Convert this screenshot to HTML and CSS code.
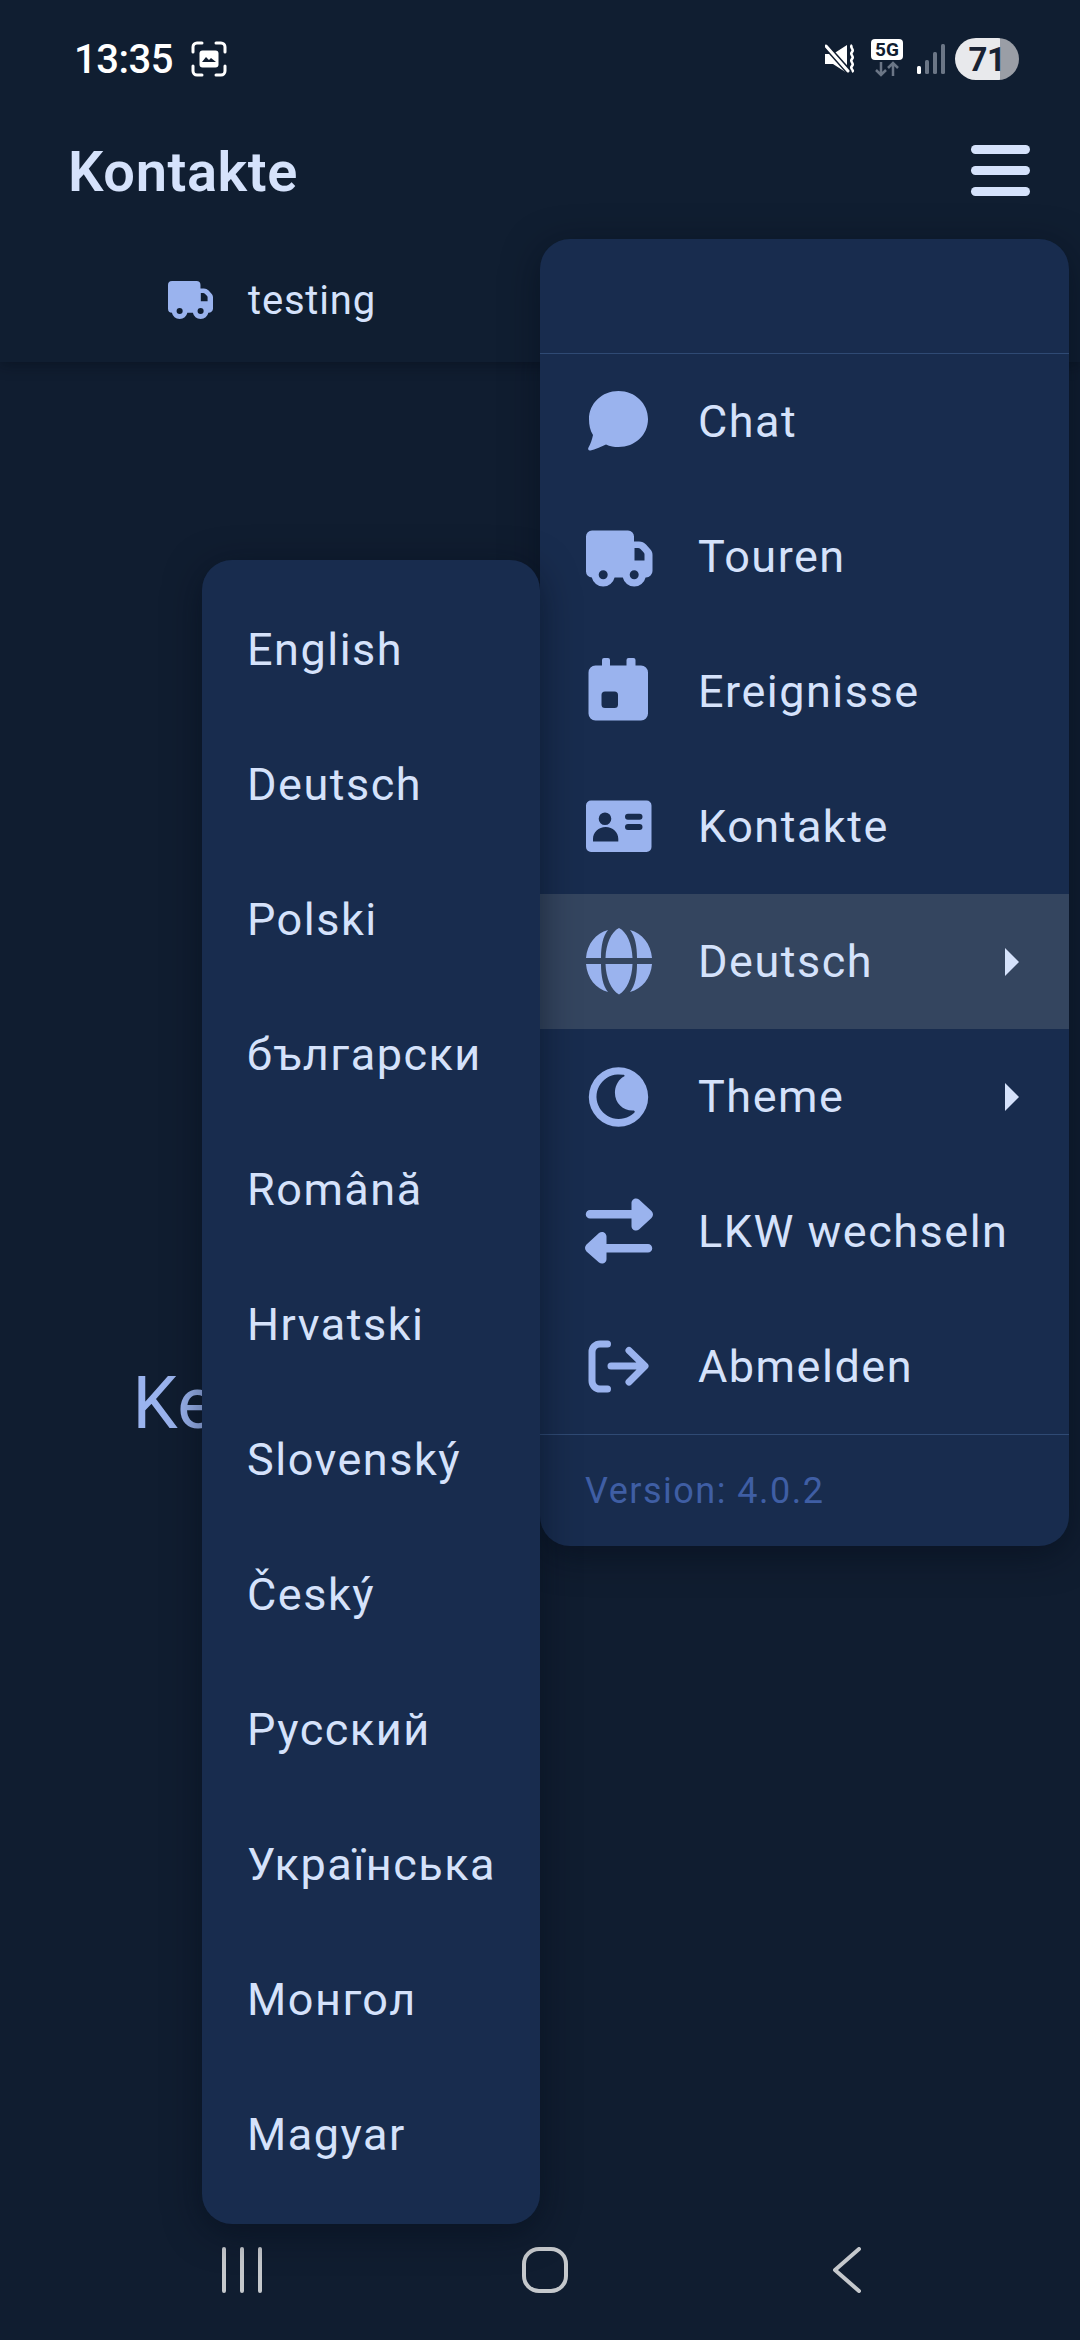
FILE: index.html
```html
<!DOCTYPE html>
<html lang="de">
<head>
<meta charset="utf-8">
<title>Kontakte</title>
<link rel="stylesheet" href="styles.css">
</head>
<body>
<div class="screen">
  <div class="top">
    <div class="status">
      <span class="time">13:35</span>
      <svg class="shot" viewBox="0 0 36 36" width="36" height="36"><path d="M2 11V6a4 4 0 0 1 4-4h5M25 2h5a4 4 0 0 1 4 4v5M34 25v5a4 4 0 0 1-4 4h-5M11 34H6a4 4 0 0 1-4-4v-5" fill="none" stroke="#fff" stroke-width="3" stroke-linecap="round"/><rect x="8.500" y="9.500" width="19" height="17" rx="3" fill="#fff"/><path d="M11 21l4-5 3 3 2-2 5 4z" fill="#101d30"/></svg>
      <span class="grow"></span>
      <svg class="mute" viewBox="0 0 32 32" width="32" height="32"><path d="M0 11h8l14-9v28l-14-9H0z" fill="#fff"/><path d="M0 2l24 27" stroke="#101d30" stroke-width="6"/><path d="M1 3l22 25" stroke="#fff" stroke-width="3" stroke-linecap="round"/><path d="M27 2c-3 3 3 4 0 7s3 4 0 7 3 4 0 7 3 4 0 6" fill="none" stroke="#fff" stroke-width="2.500"/></svg>
      <div class="net">
        <span class="net-label">5G</span>
        <svg viewBox="0 0 32 16" width="32" height="16"><path d="M10 1v13M5 9l5 5 5-5M22 15V2M17 7l5-5 5 5" fill="none" stroke="#6b7686" stroke-width="2.500"/></svg>
      </div>
      <svg class="signal" viewBox="0 0 28 30" width="28" height="30"><rect x="0" y="22" width="4" height="8" rx="1.500" fill="#fff"/><rect x="8" y="16" width="4" height="14" rx="1.500" fill="#6b7686"/><rect x="16" y="8" width="4" height="22" rx="1.500" fill="#6b7686"/><rect x="24" y="0" width="4" height="30" rx="1.500" fill="#6b7686"/></svg>
      <div class="battery"><span class="battery-num">71</span></div>
    </div>
    <div class="appbar">
      <h1 class="title">Kontakte</h1>
      <div class="burger"><i></i><i></i><i></i></div>
    </div>
    <div class="tabrow">
      <svg class="tab-icon" viewBox="3 9.500 66.500 56" width="45" height="38"><use href="#truck72"/></svg>
      <span class="tab-text">testing</span>
    </div>
  </div>
  <main class="content"><p class="empty">Keine Kontakte gefunden</p></main>
  <nav class="navbar">
    <svg viewBox="0 0 42 46" width="42" height="46"><path d="M3 2v42M21 2v42M39 2v42" stroke="#c5c8cc" stroke-width="4" stroke-linecap="round"/></svg>
    <svg class="nav-home" viewBox="0 0 46 46" width="46" height="46"><rect x="2" y="2" width="42" height="42" rx="15" fill="none" stroke="#c5c8cc" stroke-width="4"/></svg>
    <svg class="nav-back" viewBox="0 0 30 46" width="30" height="46"><path d="M27 2L3 23l24 21" fill="none" stroke="#c5c8cc" stroke-width="4" stroke-linecap="round" stroke-linejoin="round"/></svg>
  </nav>

  <div class="menu menu-main">
    <div class="menu-head"></div>
    <div class="item">
      <svg class="ico" viewBox="0 0 72 72"><path d="M35.500 5C52 5 65 17.500 65 33 65 49 52 61 35.500 61c-4.500 0-8.500-.500-12.500-2.500-5 2.500-11 5-15.500 6-2 .500-3-1.500-2-3 2-3.500 3.500-7.500 4.500-12.500C7 44.500 6 39 6 33 6 17.500 19 5 35.500 5z"/></svg>
      <span>Chat</span>
    </div>
    <div class="item">
      <svg class="ico" viewBox="0 0 72 72"><use href="#truck72"/></svg>
      <span>Touren</span>
    </div>
    <div class="item">
      <svg class="ico" viewBox="0 0 72 72"><path fill-rule="evenodd" d="M21 2h4a2 2 0 0 1 2 2v5.500h16.500V4a2 2 0 0 1 2-2h5a2 2 0 0 1 2 2v5.500H58a7 7 0 0 1 7 7v41a7 7 0 0 1-7 7H12.500a7 7 0 0 1-7-7v-41a7 7 0 0 1 7-7H19V4a2 2 0 0 1 2-2zM22 35.500a3.500 3.500 0 0 0-3.500 3.500v9.500A3.500 3.500 0 0 0 22 52h9.500a3.500 3.500 0 0 0 3.500-3.500V39a3.500 3.500 0 0 0-3.500-3.500z"/></svg>
      <span>Ereignisse</span>
    </div>
    <div class="item">
      <svg class="ico" viewBox="0 0 72 72"><path fill-rule="evenodd" d="M8 9.500h55.500a5 5 0 0 1 5 5V56a5 5 0 0 1-5 5H8a5 5 0 0 1-5-5V14.500a5 5 0 0 1 5-5zM22 21.500a6.300 6.300 0 1 0 0 12.600 6.300 6.300 0 0 0 0-12.600zM10 50.500h25.300c0-.800 0-1.500 0-2.500 0-7-5.500-12-12.600-12S10 41 10 48c0 1 0 1.700 0 2.500zM45 22.800a3 3 0 0 0 0 6h11.500a3 3 0 0 0 0-6zM45 33a3 3 0 0 0 0 6h11.500a3 3 0 0 0 0-6z"/></svg>
      <span>Kontakte</span>
    </div>
    <div class="item active">
      <svg class="ico" viewBox="0 0 72 72"><path d="M36 2C44 6 49 18 49.500 32H22.500C23 18 28 6 36 2zM22.500 38H49.500C49 52 44 64 36 68.500 28 64 23 52 22.500 38zM25 4C20 10 18 20 18 32H3C4 18 13 7 25 4zM47 4C52 10 54 20 54 32H69C68 18 59 7 47 4zM3 38H18C18 50 20 60 25 66 13 63 4 52 3 38zM69 38H54C54 50 52 60 47 66 59 63 68 52 69 38z"/></svg>
      <span>Deutsch</span>
      <i class="caret"></i>
    </div>
    <div class="item">
      <svg class="ico" viewBox="0 0 72 72"><path fill-rule="evenodd" d="M35.500 6.300a29.700 29.700 0 1 1 0 59.400 29.700 29.700 0 0 1 0-59.400zM40 13.800A22.300 22.300 0 1 0 51 52c1.500-1 .500-2.500-.500-2.500C40 50 31 42 32 30 32.500 24 36 18 41 15.500c1-.800.500-1.800-1-1.700z"/></svg>
      <span>Theme</span>
      <i class="caret"></i>
    </div>
    <div class="item">
      <svg class="ico" viewBox="0 0 72 72"><path d="M7 14H48.500V7c0-4 4.500-6 7.500-3.500L68.500 15c2 2 2 5 0 7L56 33.500c-3 2.500-7.500.500-7.500-3.500V22.500H7a4.250 4.250 0 0 1 0-8.500zM65 56.500H23.500V63c0 4-4.500 6-7.500 3.500L3.500 55.500c-2-2-2-5 0-7L16 37c3-2.500 7.500-.500 7.500 3.500V48H65a4.250 4.250 0 0 1 0 8.500z"/></svg>
      <span>LKW wechseln</span>
    </div>
    <div class="item">
      <svg class="ico ico-line" viewBox="0 0 72 72"><path d="M24.500 13H17a8 8 0 0 0-8 8V50a8 8 0 0 0 8 8H24.500M46 19.500L62 35 46 51M28 35H60"/></svg>
      <span>Abmelden</span>
    </div>
    <div class="menu-foot">Version: 4.0.2</div>
  </div>

  <div class="menu menu-lang">
    <div class="item lang">English</div>
    <div class="item lang">Deutsch</div>
    <div class="item lang">Polski</div>
    <div class="item lang">български</div>
    <div class="item lang">Română</div>
    <div class="item lang">Hrvatski</div>
    <div class="item lang">Slovenský</div>
    <div class="item lang">Český</div>
    <div class="item lang">Русский</div>
    <div class="item lang">Українська</div>
    <div class="item lang">Монгол</div>
    <div class="item lang">Magyar</div>
  </div>

  <svg class="defs" width="0" height="0">
    <defs>
      <path id="truck72" fill-rule="evenodd" d="M9 9.500H45a6 6 0 0 1 6 6v5h5c3 0 5 1 7 3l4 4.500c2 2 2.500 4 2.500 6V50a6.500 6.500 0 0 1-6.500 6.500h-.400a11.700 11.700 0 0 1-22.800 0H31.600a11.700 11.700 0 0 1-22.800 0H9a6 6 0 0 1-6-6v-35a6 6 0 0 1 6-6zM51.500 27V39.500h10V33.500c0-.800-.300-1.500-1-2.200l-3-3.200c-.700-.700-1.500-1.100-2.500-1.100zM20.200 49.300a4.500 4.500 0 1 0 0 9 4.500 4.500 0 0 0 0-9zM51.200 49.300a4.500 4.500 0 1 0 0 9 4.500 4.500 0 0 0 0-9z"/>
    </defs>
  </svg>
</div>
</body>
</html>
```
FILE: styles.css
```css
* { box-sizing: border-box; }
html, body { margin: 0; padding: 0; }
body { background: #101d30; font-family: Roboto, "Noto Sans", sans-serif; }
.screen { position: relative; width: 1080px; height: 2340px; overflow: hidden; background: #101d30; display: flex; flex-direction: column; }
.top { background: #101e31; box-shadow: 0 2px 14px rgba(4, 10, 20, .45); position: relative; height: 362px; flex: none; }
.status { height: 118px; display: flex; align-items: center; padding: 0 61px 0 74px; color: #fff; }
.time { font-size: 40px; font-weight: 500; letter-spacing: -.5px; width: 117px; }
.grow { flex: 1; }
.shot { display: block; }
.mute { margin-right: 14px; }
.net { width: 32px; display: flex; flex-direction: column; align-items: center; margin-right: 14px; gap: 1px; margin-top: -2px; }
.net svg { display: block; }
.net-label { width: 32px; height: 21px; background: #fff; border-radius: 4px; color: #101d30; font-size: 19px; font-weight: 700; line-height: 21px; text-align: center; }
.signal { margin-right: 10px; }
.battery { width: 64px; height: 42px; border-radius: 21px; background: linear-gradient(90deg, #e8e9ec 0 45px, #9a9ea6 45px); color: #182233; display: flex; align-items: center; justify-content: center; }
.battery-num { font-size: 33px; font-weight: 700; letter-spacing: -.5px; }
.appbar { height: 108px; display: flex; align-items: center; justify-content: space-between; padding: 0 50px 0 68px; }
.title { margin: 0; font-size: 56px; font-weight: 600; letter-spacing: .6px; color: #d5e2fb; }
.burger { width: 59px; display: flex; flex-direction: column; gap: 12px; margin-bottom: 3px; }
.burger i { display: block; height: 9px; border-radius: 5px; background: #d5e2fb; }
.tabrow { height: 136px; display: flex; align-items: center; padding: 12px 0 0 168px; }
.tab-icon { fill: #9ab3ee; display: block; margin-right: 35px; }
.tab-text { font-size: 40px; letter-spacing: .8px; color: #d5e2fb; }
.content { flex: 1; display: flex; justify-content: center; align-items: flex-start; }
.empty { margin: 0; padding-top: 1000px; font-size: 72px; line-height: 84px; letter-spacing: .6px; color: #9ab3ee; white-space: nowrap; }
.navbar { flex: none; height: 116px; display: flex; align-items: center; padding: 0 0 24px 221px; }
.navbar svg { display: block; }
.nav-home { margin-left: 259px; }
.nav-back { margin-left: 264px; }
.menu { position: absolute; background: #182c4e; box-shadow: 0 8px 36px rgba(4, 10, 22, .5); color: #d5e2fb; font-size: 45px; letter-spacing: 1.500px; }
.menu-main { left: 540px; top: 239px; width: 529px; height: 1307px; border-radius: 30px; overflow: hidden; }
.menu-head { height: 115px; border-bottom: 1px solid #2f4a74; }
.item { height: 135px; display: flex; align-items: center; padding-left: 43px; white-space: nowrap; }
.item.active { background: #34455f; }
.ico { width: 72px; height: 72px; fill: #9ab3ee; display: block; flex: none; margin-right: 43px; }
.ico-line { fill: none; stroke: #9ab3ee; stroke-width: 7; stroke-linecap: round; stroke-linejoin: round; }
.caret { margin-left: auto; margin-right: 50px; width: 0; height: 0; border-left: 14px solid #d5e2fb; border-top: 14px solid transparent; border-bottom: 14px solid transparent; }
.menu-foot { height: 112px; border-top: 1px solid #2f4a74; display: flex; align-items: center; padding-left: 45px; font-size: 36px; letter-spacing: 1.500px; color: #3f5ea4; }
.menu-lang { left: 202px; top: 560px; width: 338px; height: 1664px; border-radius: 30px; padding: 22px 0; }
.item.lang { padding-left: 45px; }
.defs { position: absolute; }
```
